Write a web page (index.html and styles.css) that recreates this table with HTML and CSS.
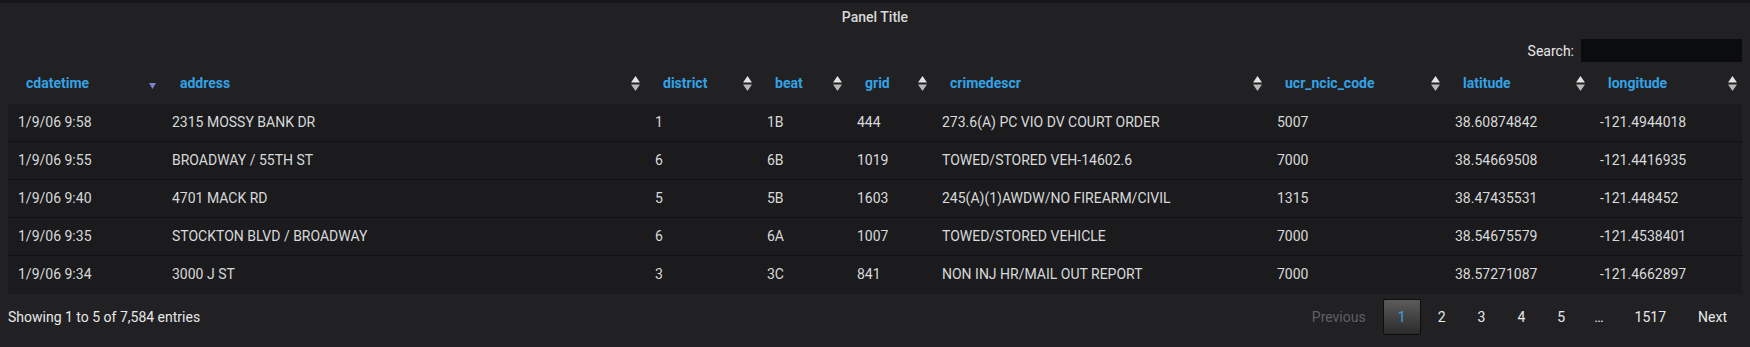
FILE: index.html
```html
<!DOCTYPE html>
<html>
<head>
<meta charset="utf-8">
<link rel="stylesheet" href="styles.css">
</head>
<body>
<div class="panel">
  <div class="panel-title">Panel Title</div>
  <div class="search-row">
    <label class="search-label">Search:</label>
    <input class="search-input" type="text">
  </div>
  <table class="data">
    <colgroup>
      <col class="c-date"><col class="c-addr"><col class="c-dist"><col class="c-beat"><col class="c-grid"><col class="c-crime"><col class="c-ucr"><col class="c-lat"><col class="c-lon">
    </colgroup>
    <thead>
      <tr>
        <th><div class="th-in"><span>cdatetime</span><svg class="ico-desc" width="7" height="6" viewBox="0 0 7 6"><path d="M0 0H7L3.5 6Z" fill="#7b7fcf"/></svg></div></th>
        <th><div class="th-in"><span>address</span><svg class="ico-both" width="9" height="15" viewBox="0 0 9 15"><path d="M4.5 0L9 6.5H0Z" fill="#e4e4e4"/><path d="M0 8.5H9L4.5 15Z" fill="#b8b8b8"/></svg></div></th>
        <th><div class="th-in"><span>district</span><svg class="ico-both" width="9" height="15" viewBox="0 0 9 15"><path d="M4.5 0L9 6.5H0Z" fill="#e4e4e4"/><path d="M0 8.5H9L4.5 15Z" fill="#b8b8b8"/></svg></div></th>
        <th><div class="th-in"><span>beat</span><svg class="ico-both" width="9" height="15" viewBox="0 0 9 15"><path d="M4.5 0L9 6.5H0Z" fill="#e4e4e4"/><path d="M0 8.5H9L4.5 15Z" fill="#b8b8b8"/></svg></div></th>
        <th><div class="th-in"><span>grid</span><svg class="ico-both" width="9" height="15" viewBox="0 0 9 15"><path d="M4.5 0L9 6.5H0Z" fill="#e4e4e4"/><path d="M0 8.5H9L4.5 15Z" fill="#b8b8b8"/></svg></div></th>
        <th><div class="th-in"><span>crimedescr</span><svg class="ico-both" width="9" height="15" viewBox="0 0 9 15"><path d="M4.5 0L9 6.5H0Z" fill="#e4e4e4"/><path d="M0 8.5H9L4.5 15Z" fill="#b8b8b8"/></svg></div></th>
        <th><div class="th-in"><span>ucr_ncic_code</span><svg class="ico-both" width="9" height="15" viewBox="0 0 9 15"><path d="M4.5 0L9 6.5H0Z" fill="#e4e4e4"/><path d="M0 8.5H9L4.5 15Z" fill="#b8b8b8"/></svg></div></th>
        <th><div class="th-in"><span>latitude</span><svg class="ico-both" width="9" height="15" viewBox="0 0 9 15"><path d="M4.5 0L9 6.5H0Z" fill="#e4e4e4"/><path d="M0 8.5H9L4.5 15Z" fill="#b8b8b8"/></svg></div></th>
        <th><div class="th-in"><span>longitude</span><svg class="ico-both" width="9" height="15" viewBox="0 0 9 15"><path d="M4.5 0L9 6.5H0Z" fill="#e4e4e4"/><path d="M0 8.5H9L4.5 15Z" fill="#b8b8b8"/></svg></div></th>
      </tr>
    </thead>
    <tbody>
      <tr><td>1/9/06 9:58</td><td>2315 MOSSY BANK DR</td><td>1</td><td>1B</td><td>444</td><td>273.6(A) PC VIO DV COURT ORDER</td><td>5007</td><td>38.60874842</td><td>-121.4944018</td></tr>
      <tr><td>1/9/06 9:55</td><td>BROADWAY / 55TH ST</td><td>6</td><td>6B</td><td>1019</td><td>TOWED/STORED VEH-14602.6</td><td>7000</td><td>38.54669508</td><td>-121.4416935</td></tr>
      <tr><td>1/9/06 9:40</td><td>4701 MACK RD</td><td>5</td><td>5B</td><td>1603</td><td>245(A)(1)AWDW/NO FIREARM/CIVIL</td><td>1315</td><td>38.47435531</td><td>-121.448452</td></tr>
      <tr><td>1/9/06 9:35</td><td>STOCKTON BLVD / BROADWAY</td><td>6</td><td>6A</td><td>1007</td><td>TOWED/STORED VEHICLE</td><td>7000</td><td>38.54675579</td><td>-121.4538401</td></tr>
      <tr><td>1/9/06 9:34</td><td>3000 J ST</td><td>3</td><td>3C</td><td>841</td><td>NON INJ HR/MAIL OUT REPORT</td><td>7000</td><td>38.57271087</td><td>-121.4662897</td></tr>
    </tbody>
  </table>
  <div class="footer">
    <div class="info">Showing 1 to 5 of 7,584 entries</div>
    <div class="paginate">
      <span class="pbtn disabled">Previous</span>
      <span class="pbtn current">1</span>
      <span class="pbtn">2</span>
      <span class="pbtn">3</span>
      <span class="pbtn">4</span>
      <span class="pbtn">5</span>
      <span class="ellipsis">…</span>
      <span class="pbtn">1517</span>
      <span class="pbtn">Next</span>
    </div>
  </div>
</div>
</body>
</html>
```

FILE: styles.css
```css
html, body {
  margin: 0;
  padding: 0;
  background: #161719;
}

body {
  font-family: Roboto, "Liberation Sans", sans-serif;
  font-size: 14px;
  color: #d8d9da;
  padding-top: 3px;
}

.panel {
  background: #212124;
  height: 344px;
  padding: 0 8px;
  box-sizing: border-box;
}

.panel-title {
  height: 28px;
  line-height: 28px;
  text-align: center;
  font-weight: 500;
  color: #d8d9da;
}

.search-row {
  display: flex;
  justify-content: flex-end;
  align-items: center;
  gap: 7px;
  margin-top: 8px;
  height: 23px;
}

.search-label {
  color: #e8e8e8;
}

.search-input {
  width: 161px;
  height: 23px;
  box-sizing: border-box;
  background: #0b0c0e;
  border: none;
  margin: 0;
  padding: 0 6px;
  outline: none;
}

.data {
  width: 100%;
  table-layout: fixed;
  border-collapse: collapse;
  margin-top: 4px;
}

.c-date { width: 154px; }
.c-addr { width: 483px; }
.c-dist { width: 112px; }
.c-beat { width: 90px; }
.c-grid { width: 85px; }
.c-crime { width: 335px; }
.c-ucr { width: 178px; }
.c-lat { width: 145px; }
.c-lon { width: 152px; }

.data th {
  padding: 9px 5px 12px 18px;
  height: 38px;
  box-sizing: border-box;
  line-height: 17px;
  font-weight: 700;
  color: #33a2e5;
  text-align: left;
}

.th-in {
  display: flex;
  align-items: center;
  justify-content: space-between;
}

.ico-desc {
  margin-top: 5px;
  margin-right: 1px;
}

.data td {
  padding: 10px 10px;
  line-height: 17px;
  height: 37px;
  box-sizing: border-box;
  background: #1b1b1d;
  color: #d8d9da;
  white-space: nowrap;
}

.data tbody tr + tr td {
  border-top: 1px solid #111113;
  height: 38px;
}

.footer {
  display: flex;
  justify-content: space-between;
  align-items: center;
  padding-top: 5px;
}

.info {
  color: #e8e8e8;
}

.paginate {
  display: flex;
  align-items: center;
}

.pbtn {
  display: inline-flex;
  align-items: center;
  justify-content: center;
  height: 36px;
  box-sizing: border-box;
  padding: 0 14px;
  margin-left: 2px;
  border: 1px solid transparent;
  color: #e8e8e8;
}

.pbtn.disabled {
  color: #5f6063;
}

.pbtn.current {
  width: 38px;
  padding: 0;
  color: #33a2e5;
  border: 1px solid #0e0e0e;
  border-radius: 2px;
  background: linear-gradient(to bottom, #5c5a5a 0%, #2c2b2b 100%);
}

.ellipsis {
  padding: 0 14px;
  color: #e8e8e8;
}
```
